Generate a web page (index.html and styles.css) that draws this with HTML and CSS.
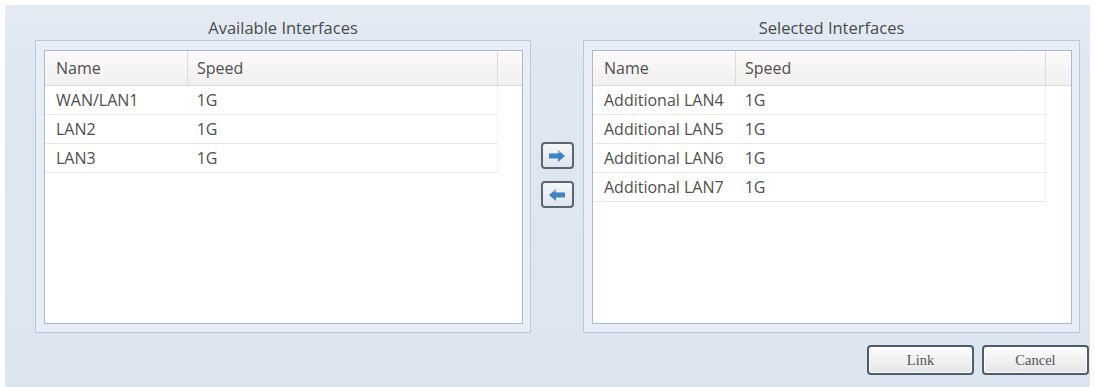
FILE: index.html
```html
<!DOCTYPE html>
<html>
<head>
<meta charset="utf-8">
<link rel="stylesheet" href="styles.css">
</head>
<body>
<div class="panel">
  <div class="lists">
    <section class="group">
      <div class="title">Available Interfaces</div>
      <div class="frame">
        <div class="grid">
          <div class="head"><div class="c name">Name</div><div class="c speed">Speed</div><div class="c pad"></div></div>
          <div class="row"><div class="c name">WAN/LAN1</div><div class="c speed">1G</div></div>
          <div class="row"><div class="c name">LAN2</div><div class="c speed">1G</div></div>
          <div class="row"><div class="c name">LAN3</div><div class="c speed">1G</div></div>
        </div>
      </div>
    </section>
    <div class="movers">
      <button class="mv" type="button"><svg width="18" height="12" viewBox="0 0 18 12"><polygon points="1,3.5 10,3.5 10,0 17,6 10,12 10,8.5 1,8.5" fill="#3f83c4"/><polygon points="1,3.5 10,3.5 10,0 13.5,3 1,3" fill="#7fb0dd"/></svg></button>
      <button class="mv" type="button"><svg width="18" height="12" viewBox="0 0 18 12"><polygon points="17,3.5 8,3.5 8,0 1,6 8,12 8,8.5 17,8.5" fill="#3f83c4"/><polygon points="17,3.5 8,3.5 8,0 4.5,3 17,3" fill="#7fb0dd"/></svg></button>
    </div>
    <section class="group">
      <div class="title">Selected Interfaces</div>
      <div class="frame">
        <div class="grid">
          <div class="head"><div class="c name">Name</div><div class="c speed">Speed</div><div class="c pad"></div></div>
          <div class="row"><div class="c name">Additional LAN4</div><div class="c speed">1G</div></div>
          <div class="row"><div class="c name">Additional LAN5</div><div class="c speed">1G</div></div>
          <div class="row"><div class="c name">Additional LAN6</div><div class="c speed">1G</div></div>
          <div class="row"><div class="c name">Additional LAN7</div><div class="c speed">1G</div></div>
        </div>
      </div>
    </section>
  </div>
  <div class="actions">
    <button class="btn" type="button">Link</button>
    <button class="btn" type="button">Cancel</button>
  </div>
</div>
</body>
</html>
```
FILE: styles.css
```css
html, body {
  background: #ffffff;
}
body {
  margin: 5px 5px 0 5px;
  font-family: "Open Sans", "DejaVu Sans", sans-serif;
  color: #4f4f4f;
}
.panel {
  box-sizing: border-box;
  height: 382px;
  padding: 10px 1px 0 30px;
  background: linear-gradient(#e4ebf5, #dde6f1 20%, #dce5f0);
}
.lists {
  display: grid;
  grid-template-columns: 496px 52px 497px;
}
.title {
  height: 25px;
  line-height: 25px;
  text-align: center;
  font-size: 16.5px;
  color: #4a4a4a;
}
.frame {
  box-sizing: border-box;
  height: 293px;
  border: 1px solid #bac8da;
  background: #e7eef7;
  padding: 9px 7px 8px 8px;
}
.grid {
  box-sizing: border-box;
  height: 100%;
  border: 1px solid #adbac9;
  background: #ffffff;
}
.head {
  display: flex;
  height: 35px;
  box-sizing: border-box;
  border-bottom: 1px solid #dcdcdc;
  background: linear-gradient(#fcfbfa, #f1f0ef);
}
.head .c {
  border-right: 1px solid #dcdcdc;
}
.head .pad {
  border-right: none;
  flex: 1;
}
.c {
  box-sizing: border-box;
  display: flex;
  align-items: center;
  font-size: 16px;
  white-space: nowrap;
}
.name {
  width: 143px;
  padding-left: 11px;
}
.speed {
  width: 310px;
  padding-left: 9px;
}
.row {
  display: flex;
  width: 453px;
  height: 29px;
  box-sizing: border-box;
  border-bottom: 1px solid #e8e8e8;
  border-right: 1px solid #f0f0f0;
}
.movers {
  display: flex;
  flex-direction: column;
  align-items: center;
  gap: 12px;
  padding-top: 127px;
}
.mv {
  box-sizing: border-box;
  width: 33px;
  height: 27px;
  padding: 0;
  display: flex;
  align-items: center;
  justify-content: center;
  border: 2px solid #5b6674;
  border-radius: 4px;
  background: linear-gradient(#f5f7f9, #dfe5ec);
}
.actions {
  display: flex;
  justify-content: flex-end;
  gap: 8px;
  margin-top: 12px;
}
.btn {
  box-sizing: border-box;
  width: 107px;
  height: 30px;
  padding: 0;
  border: 2px solid #4f5c6b;
  border-radius: 4px;
  background: linear-gradient(#fdfdfd, #e3e5e8);
  box-shadow: inset 0 0 0 1px #ffffff;
  font-family: "Liberation Serif", "Times New Roman", serif;
  font-size: 14.5px;
  color: #555555;
}
```
